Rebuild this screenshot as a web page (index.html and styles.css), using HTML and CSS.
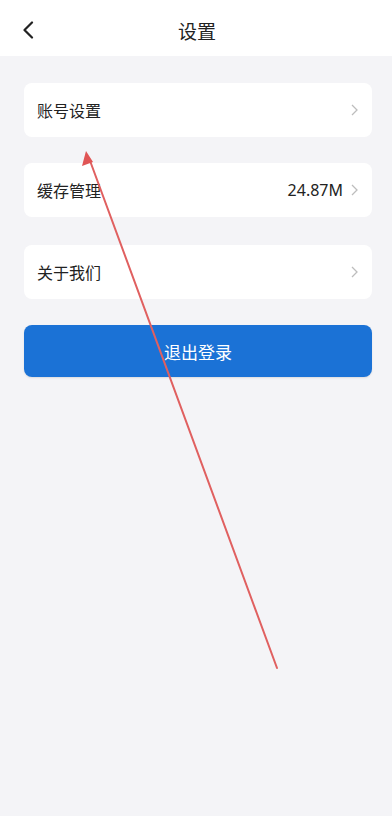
FILE: index.html
```html
<!DOCTYPE html>
<html lang="zh">
<head>
<meta charset="utf-8">
<link rel="stylesheet" href="styles.css">
</head>
<body>
<div class="page">
  <header class="topbar">
    <svg class="back" width="12" height="18" viewBox="0 0 12 18"><path d="M10 1.5 L2.5 9 L10 16.5" fill="none" stroke="#222" stroke-width="2.2" stroke-linecap="round" stroke-linejoin="round"/></svg>
    <div class="title">设置</div>
  </header>
  <main class="content">
    <div class="card"><span class="label">账号设置</span><span class="right"><svg class="chev" width="7" height="12" viewBox="0 0 7 12"><path d="M1 1 L6 6 L1 11" fill="none" stroke="#bdbdbd" stroke-width="1.3"/></svg></span></div>
    <div class="card"><span class="label">缓存管理</span><span class="right"><span class="value">24.87M</span><svg class="chev" width="7" height="12" viewBox="0 0 7 12"><path d="M1 1 L6 6 L1 11" fill="none" stroke="#bdbdbd" stroke-width="1.3"/></svg></span></div>
    <div class="card"><span class="label">关于我们</span><span class="right"><svg class="chev" width="7" height="12" viewBox="0 0 7 12"><path d="M1 1 L6 6 L1 11" fill="none" stroke="#bdbdbd" stroke-width="1.3"/></svg></span></div>
    <button class="logout">退出登录</button>
  </main>
  <svg class="annot" width="392" height="816" viewBox="0 0 392 816">
    <line x1="277" y1="668" x2="89" y2="158" stroke="#e06060" stroke-width="2" stroke-linecap="round"/>
    <path d="M86 151 L82 166 L93 162 Z" fill="#e05555"/>
  </svg>
</div>
</body>
</html>
```
FILE: styles.css
```css
* { box-sizing: border-box; }
html, body { margin: 0; padding: 0; }
body {
  background: #f4f4f7;
  font-family: "Noto Sans CJK SC", "Noto Sans", sans-serif;
  color: #222;
}
.page { position: relative; width: 392px; height: 816px; overflow: hidden; }
.topbar {
  height: 56px;
  background: #fff;
  display: flex;
  align-items: center;
  justify-content: center;
  position: relative;
}
.back { position: absolute; left: 22px; top: 21px; }
.title { font-size: 19px; color: #222; line-height: 1; margin-top: 5px; margin-left: 2px; }
.content {
  padding: 27px 20px 0 24px;
  display: flex;
  flex-direction: column;
  gap: 26px;
}
.card {
  height: 54px;
  background: #fff;
  border-radius: 8px;
  display: flex;
  align-items: center;
  justify-content: space-between;
  padding: 0 14px 0 13px;
}
.card:nth-child(3) { margin-top: 2px; }
.label { font-size: 16px; color: #222; }
.right { display: flex; align-items: center; gap: 8px; }
.value { font-size: 16px; color: #222; font-family: "Noto Sans", sans-serif; }
.chev { display: block; }
.logout {
  height: 52px;
  border: none;
  border-radius: 8px;
  background: #1b72d6;
  color: #fff;
  font-family: "Noto Sans CJK SC", sans-serif;
  font-size: 17px;
  box-shadow: 0 1px 2px rgba(0,0,0,0.1);
}
.annot { position: absolute; left: 0; top: 0; pointer-events: none; }
```
